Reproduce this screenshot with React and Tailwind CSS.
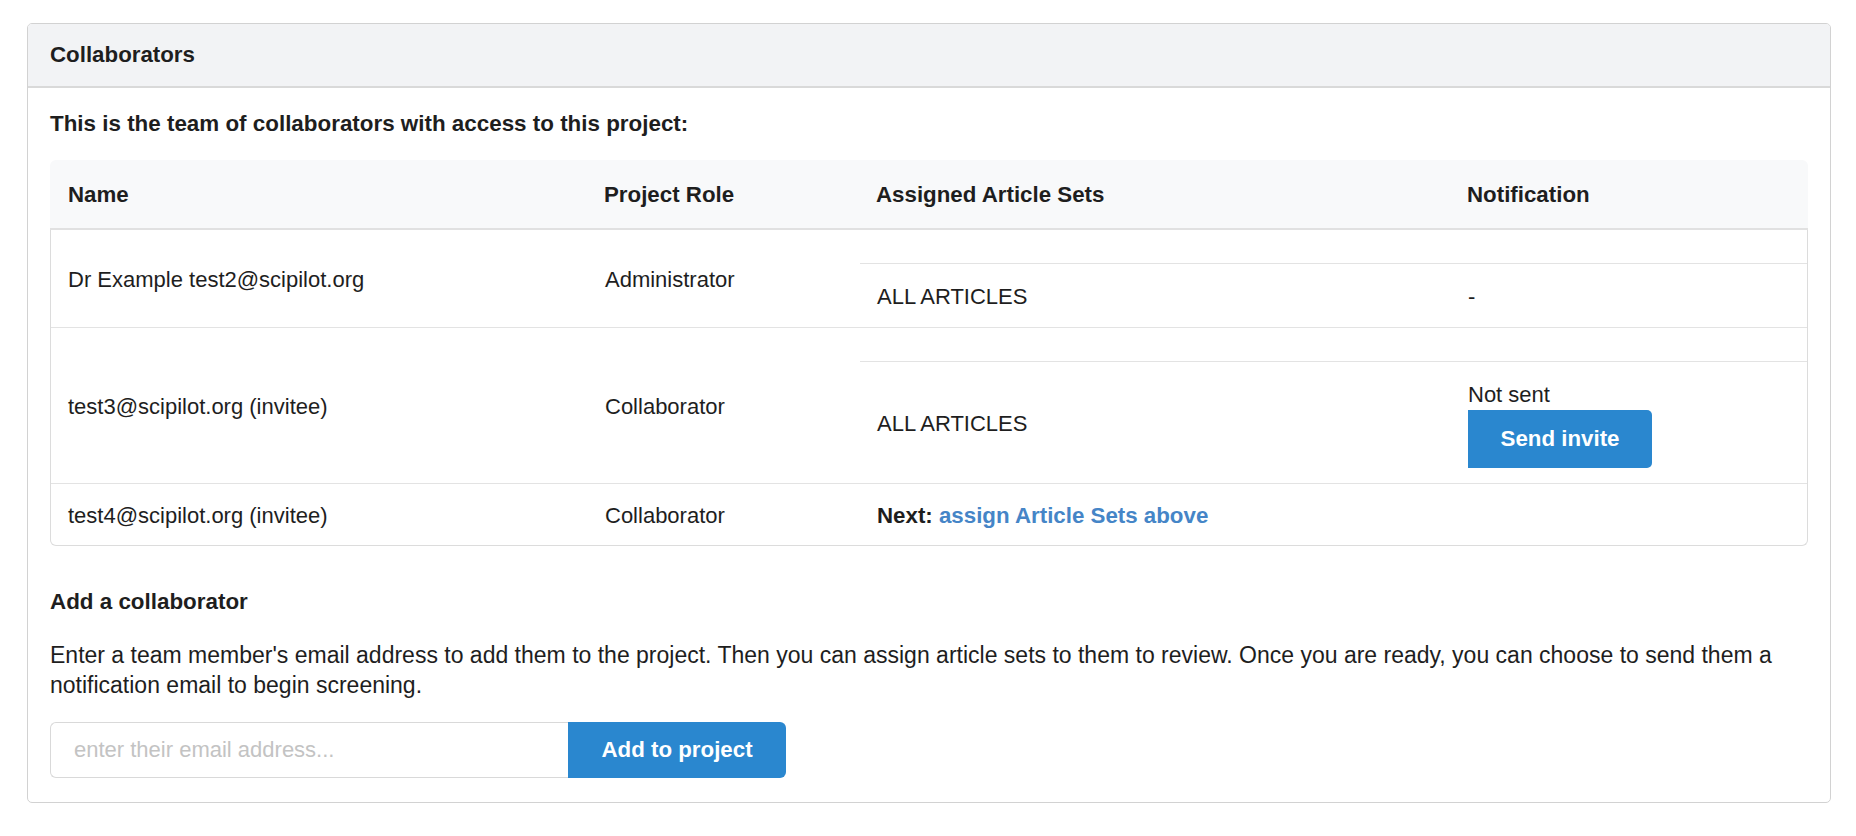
import React from 'react';

const collaborators = [
  {
    name: 'Dr Example test2@scipilot.org',
    role: 'Administrator',
    sets: 'ALL ARTICLES',
    notification: 'none',
  },
  {
    name: 'test3@scipilot.org (invitee)',
    role: 'Collaborator',
    sets: 'ALL ARTICLES',
    notification: 'not-sent',
  },
  {
    name: 'test4@scipilot.org (invitee)',
    role: 'Collaborator',
    sets: null,
    notification: null,
  },
];

const NotificationCell = ({ status }) => {
  if (status === 'not-sent') {
    return (
      <div className="flex flex-col items-start">
        <span className="leading-[30px]">Not sent</span>
        <button className="w-[184px] h-[58px] bg-[#2a87cf] text-white font-bold text-[22.3px] rounded-r-[5px]">
          Send invite
        </button>
      </div>
    );
  }
  return <span className="leading-[30px]">-</span>;
};

const CollaboratorRow = ({ person, last }) => (
  <div className={`grid grid-cols-[537px_272px_1fr] ${last ? '' : 'border-b border-[#e3e3e3]'}`}>
    <div className="flex items-center pl-[17px] pr-4 pt-[3px] leading-[30px]">{person.name}</div>
    <div className="flex items-center pl-[17px] pr-4 pt-[3px] leading-[30px]">{person.role}</div>
    {person.sets ? (
      <div className="flex flex-col">
        {/* empty leading row of the nested sets table */}
        <div className="h-[34px] border-b border-[#e3e3e3]" />
        <div className="flex-1 grid grid-cols-[591px_1fr]">
          <div className="flex items-center pl-[17px] pt-[18px] pb-[15px] leading-[30px]">{person.sets}</div>
          <div className="flex items-center pl-[17px] pt-[18px] pb-[15px]">
            <NotificationCell status={person.notification} />
          </div>
        </div>
      </div>
    ) : (
      <div className="flex items-center pl-[17px] pt-[17px] pb-[14px] leading-[30px] text-[22.3px]">
        <span className="font-bold">Next:&nbsp;</span>
        <a href="#" className="font-bold text-[#4585c7]">assign Article Sets above</a>
      </div>
    )}
  </div>
);

export default function App() {
  return (
    <div className="min-h-screen bg-white pl-[27px] pr-[25px] pt-[23px] pb-8 text-[22px] text-[#1e1e1e] font-['Liberation_Sans',Arial,sans-serif]">
      <div className="border border-[#d2d2d2] rounded-[5px] overflow-hidden">
        {/* Card header */}
        <div className="h-[64px] flex items-center px-[22px] bg-[#f2f3f5] border-b-2 border-[#d9d9d9]">
          <h2 className="font-bold text-[22.3px]">Collaborators</h2>
        </div>

        <div className="px-[22px] pt-[21px] pb-[24px]">
          <p className="font-bold text-[22.4px] leading-[30px]">This is the team of collaborators with access to this project:</p>

          {/* Collaborators table */}
          <div className="mt-[21px]">
            <div className="grid grid-cols-[537px_272px_591px_1fr] h-[70px] pt-[2px] items-center bg-[#f8f9fa] rounded-t-[6px] border-b-2 border-[#e1e1e1] font-bold text-[22.3px]">
              <div className="pl-[18px]">Name</div>
              <div className="pl-[17px]">Project Role</div>
              <div className="pl-[17px]">Assigned Article Sets</div>
              <div className="pl-[17px]">Notification</div>
            </div>
            <div className="border border-t-0 border-[#dcdcdc] rounded-b-[6px]">
              {collaborators.map((person, i) => (
                <CollaboratorRow key={i} person={person} last={i === collaborators.length - 1} />
              ))}
            </div>
          </div>

          {/* Add a collaborator */}
          <h3 className="mt-[41px] font-bold text-[22.4px] leading-[30px]">Add a collaborator</h3>
          <p className="mt-[24px] text-[23px] leading-[29.5px]">
            Enter a team member's email address to add them to the project. Then you can assign article sets to them to review. Once you are ready, you can choose to send them a notification email to begin screening.
          </p>
          <div className="mt-[22px] flex">
            <input
              type="text"
              placeholder="enter their email address..."
              className="w-[518px] h-[56px] px-[23px] border border-r-0 border-[#d9d9d9] rounded-l-[6px] placeholder:text-[#c3c3c3] outline-none"
            />
            <button className="w-[218px] h-[56px] bg-[#2a87cf] text-white font-bold text-[22.3px] rounded-r-[6px]">
              Add to project
            </button>
          </div>
        </div>
      </div>
    </div>
  );
}
